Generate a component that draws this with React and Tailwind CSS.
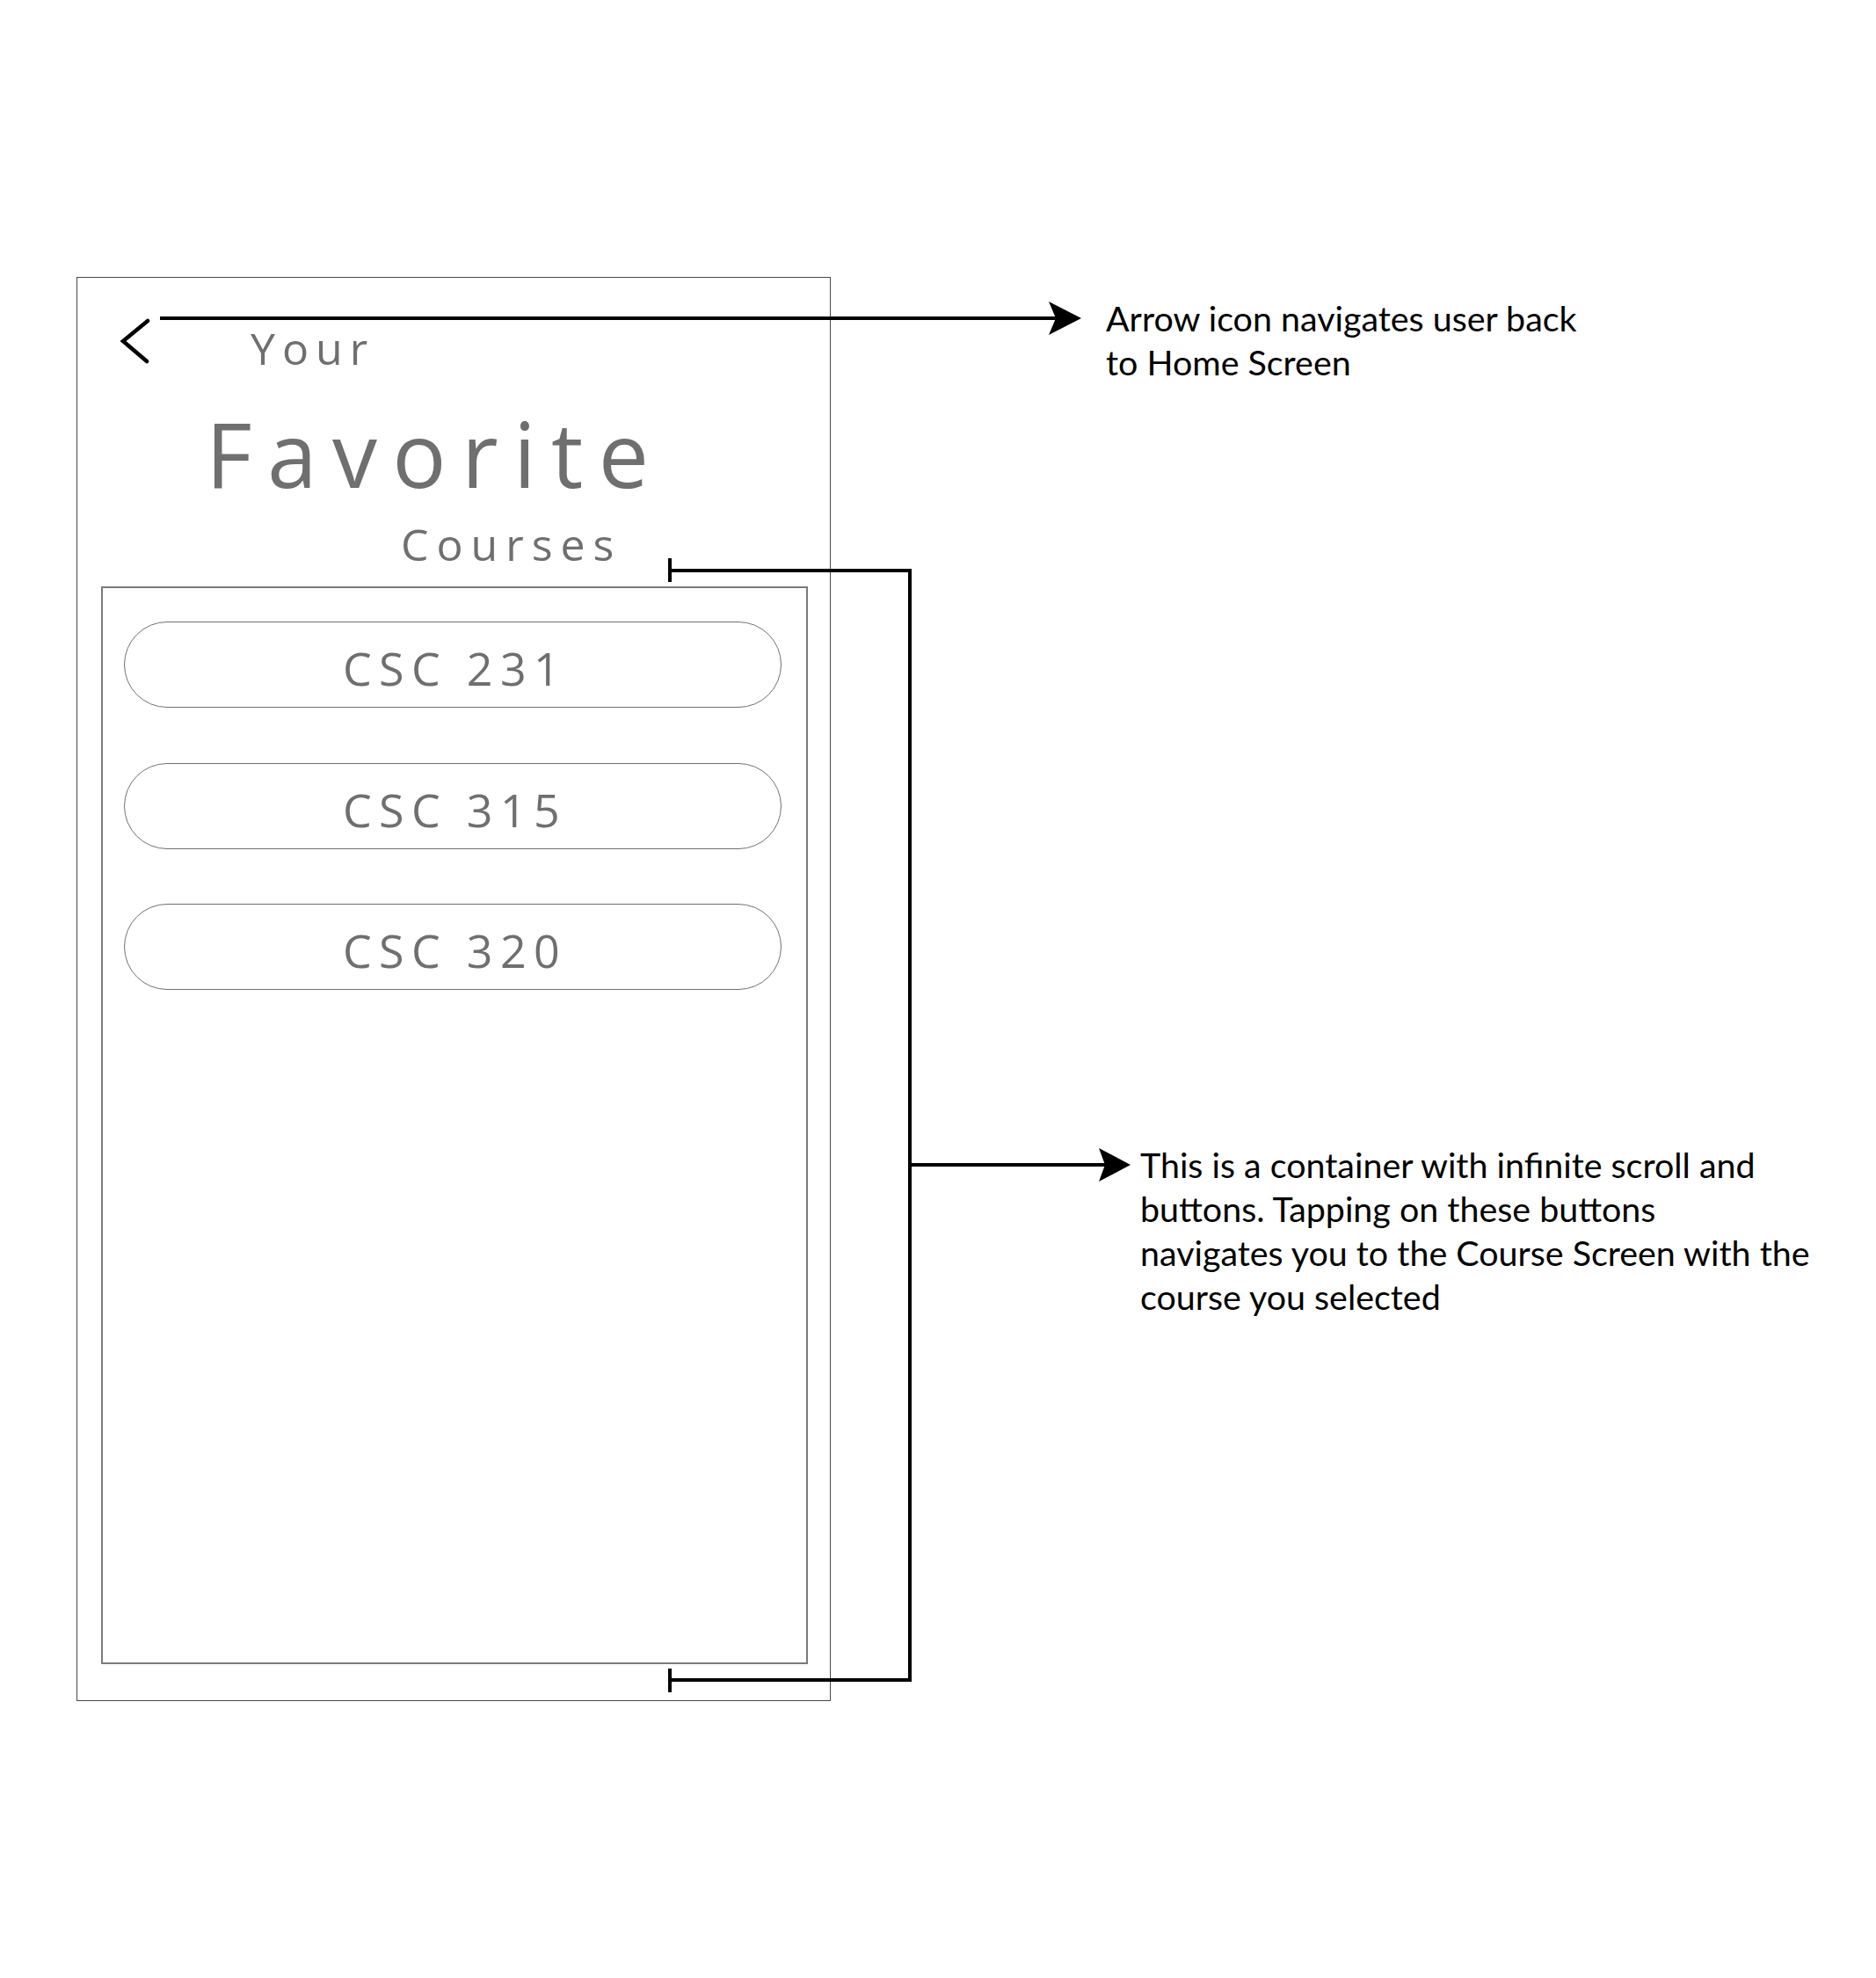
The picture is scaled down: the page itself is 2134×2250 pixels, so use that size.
import React from 'react';

const courses = ['CSC 231', 'CSC 315', 'CSC 320'];

const BackChevron = () => (
  <svg width="36" height="52" viewBox="0 0 36 52" className="shrink-0">
    <path d="M32 3 L4 26 L31 49" fill="none" stroke="#000" strokeWidth="4.5" strokeLinecap="round" strokeLinejoin="miter" />
  </svg>
);

const CourseButton = ({ label }) => (
  <button
    type="button"
    className="w-[748px] h-[98px] shrink-0 rounded-full border-[1.5px] border-[#707070] bg-white flex items-center justify-center pt-[8px] pl-[5px] text-[52px] leading-none font-normal tracking-[0.16em] text-[#6f6f6f]"
  >
    {label}
  </button>
);

// annotation arrows + bracket drawn over the wireframe
const Callouts = () => (
  <svg
    width="2134"
    height="2250"
    viewBox="0 0 2134 2250"
    className="absolute left-0 top-0 pointer-events-none"
  >
    <g stroke="#000" strokeWidth="4" fill="none">
      <path d="M182 362 H1203" />
      <path d="M762 635 V662 M762 649 H1035 V1911 H762 M762 1898 V1925" />
      <path d="M1035 1325 H1260" />
    </g>
    <polygon points="1230,362 1193,343 1201,362 1193,381" fill="#000" />
    <polygon points="1286,1325 1250,1306 1257,1325 1250,1344" fill="#000" />
  </svg>
);

export default function App() {
  return (
    <div className="relative w-[2134px] h-[2250px] bg-white font-['Open_Sans',sans-serif] overflow-hidden">
      <div className="pt-[315px] pl-[87px]">
        <div className="w-[858px] h-[1620px] border border-[#474747] flex flex-col">
          <div className="flex items-start pt-[46px] pl-[48px]">
            <BackChevron />
            <span className="ml-[113px] mt-[9px] text-[50px] leading-none font-normal tracking-[0.16em] text-[#6f6f6f]">
              Your
            </span>
          </div>
          <h1 className="ml-[146px] mt-[44px] text-[102px] leading-none font-normal tracking-[0.17em] text-[#6f6f6f]">
            Favorite
          </h1>
          <h2 className="ml-[368px] mt-[27px] text-[50px] leading-none font-normal tracking-[0.18em] text-[#6f6f6f]">
            Courses
          </h2>
          <div className="ml-[27px] mt-[23px] w-[804px] h-[1226px] border-2 border-[#7a7a7a] overflow-y-auto">
            <div className="flex flex-col gap-[62.5px] pt-[38px] pl-[24px]">
              {courses.map((c) => (
                <CourseButton key={c} label={c} />
              ))}
            </div>
          </div>
        </div>
      </div>

      <Callouts />

      <p className="absolute left-[1258px] top-[337px] w-[620px] font-['Lato',sans-serif] text-[39.4px] leading-[50px] text-black">
        Arrow icon navigates user back
        <br />
        to Home Screen
      </p>
      <p className="absolute left-[1297px] top-[1300px] w-[800px] font-['Lato',sans-serif] text-[39.4px] leading-[50px] text-black">
        This is a container with infinite scroll and
        <br />
        buttons. Tapping on these buttons
        <br />
        navigates you to the Course Screen with the
        <br />
        course you selected
      </p>
    </div>
  );
}
